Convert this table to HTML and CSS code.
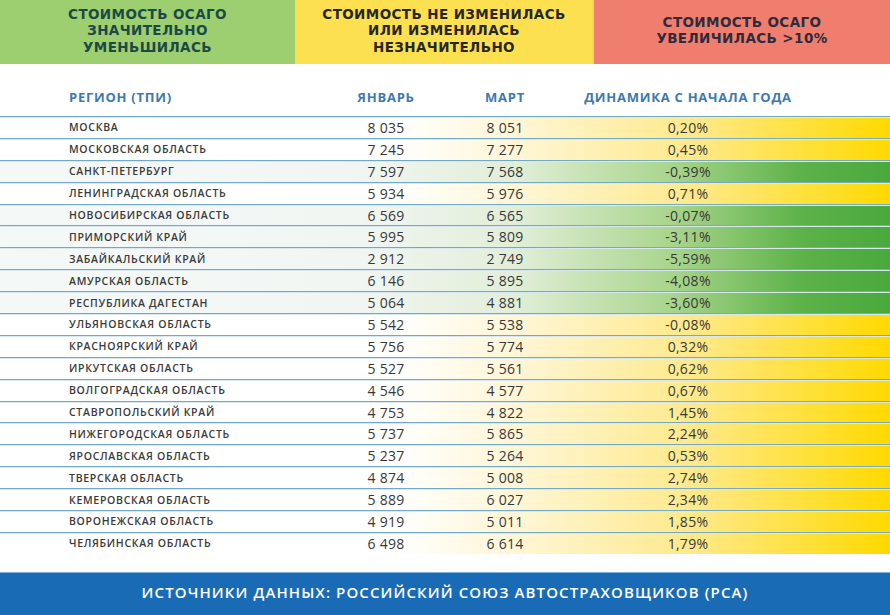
FILE: index.html
```html
<!DOCTYPE html>
<html lang="ru">
<head>
<meta charset="utf-8">
<title>ОСАГО</title>
<link rel="stylesheet" href="styles.css">
</head>
<body>
<div class="page">
  <div class="legend">
    <div class="leg leg-green">СТОИМОСТЬ ОСАГО<br>ЗНАЧИТЕЛЬНО<br>УМЕНЬШИЛАСЬ</div>
    <div class="leg leg-yellow">СТОИМОСТЬ НЕ ИЗМЕНИЛАСЬ<br>ИЛИ ИЗМЕНИЛАСЬ<br>НЕЗНАЧИТЕЛЬНО</div>
    <div class="leg leg-red">СТОИМОСТЬ ОСАГО<br>УВЕЛИЧИЛАСЬ &gt;10%</div>
  </div>
  <div class="thead">
    <div class="th th-region">РЕГИОН (ТПИ)</div>
    <div class="th th-jan">ЯНВАРЬ</div>
    <div class="th th-mar">МАРТ</div>
    <div class="th th-dyn">ДИНАМИКА С НАЧАЛА ГОДА</div>
  </div>
  <div class="tbody">
    <div class="row up"><span class="reg">МОСКВА</span><span class="num">8 035</span><span class="num">8 051</span><span class="pct">0,20%</span></div>
    <div class="row up"><span class="reg">МОСКОВСКАЯ ОБЛАСТЬ</span><span class="num">7 245</span><span class="num">7 277</span><span class="pct">0,45%</span></div>
    <div class="row down"><span class="reg">САНКТ-ПЕТЕРБУРГ</span><span class="num">7 597</span><span class="num">7 568</span><span class="pct">-0,39%</span></div>
    <div class="row up"><span class="reg">ЛЕНИНГРАДСКАЯ ОБЛАСТЬ</span><span class="num">5 934</span><span class="num">5 976</span><span class="pct">0,71%</span></div>
    <div class="row down"><span class="reg">НОВОСИБИРСКАЯ ОБЛАСТЬ</span><span class="num">6 569</span><span class="num">6 565</span><span class="pct">-0,07%</span></div>
    <div class="row down"><span class="reg">ПРИМОРСКИЙ КРАЙ</span><span class="num">5 995</span><span class="num">5 809</span><span class="pct">-3,11%</span></div>
    <div class="row down"><span class="reg">ЗАБАЙКАЛЬСКИЙ КРАЙ</span><span class="num">2 912</span><span class="num">2 749</span><span class="pct">-5,59%</span></div>
    <div class="row down"><span class="reg">АМУРСКАЯ ОБЛАСТЬ</span><span class="num">6 146</span><span class="num">5 895</span><span class="pct">-4,08%</span></div>
    <div class="row down"><span class="reg">РЕСПУБЛИКА ДАГЕСТАН</span><span class="num">5 064</span><span class="num">4 881</span><span class="pct">-3,60%</span></div>
    <div class="row up"><span class="reg">УЛЬЯНОВСКАЯ ОБЛАСТЬ</span><span class="num">5 542</span><span class="num">5 538</span><span class="pct">-0,08%</span></div>
    <div class="row up"><span class="reg">КРАСНОЯРСКИЙ КРАЙ</span><span class="num">5 756</span><span class="num">5 774</span><span class="pct">0,32%</span></div>
    <div class="row up"><span class="reg">ИРКУТСКАЯ ОБЛАСТЬ</span><span class="num">5 527</span><span class="num">5 561</span><span class="pct">0,62%</span></div>
    <div class="row up"><span class="reg">ВОЛГОГРАДСКАЯ ОБЛАСТЬ</span><span class="num">4 546</span><span class="num">4 577</span><span class="pct">0,67%</span></div>
    <div class="row up"><span class="reg">СТАВРОПОЛЬСКИЙ КРАЙ</span><span class="num">4 753</span><span class="num">4 822</span><span class="pct">1,45%</span></div>
    <div class="row up"><span class="reg">НИЖЕГОРОДСКАЯ ОБЛАСТЬ</span><span class="num">5 737</span><span class="num">5 865</span><span class="pct">2,24%</span></div>
    <div class="row up"><span class="reg">ЯРОСЛАВСКАЯ ОБЛАСТЬ</span><span class="num">5 237</span><span class="num">5 264</span><span class="pct">0,53%</span></div>
    <div class="row up"><span class="reg">ТВЕРСКАЯ ОБЛАСТЬ</span><span class="num">4 874</span><span class="num">5 008</span><span class="pct">2,74%</span></div>
    <div class="row up"><span class="reg">КЕМЕРОВСКАЯ ОБЛАСТЬ</span><span class="num">5 889</span><span class="num">6 027</span><span class="pct">2,34%</span></div>
    <div class="row up"><span class="reg">ВОРОНЕЖСКАЯ ОБЛАСТЬ</span><span class="num">4 919</span><span class="num">5 011</span><span class="pct">1,85%</span></div>
    <div class="row up last"><span class="reg">ЧЕЛЯБИНСКАЯ ОБЛАСТЬ</span><span class="num">6 498</span><span class="num">6 614</span><span class="pct">1,79%</span></div>
  </div>
  <div class="source">ИСТОЧНИКИ ДАННЫХ: РОССИЙСКИЙ СОЮЗ АВТОСТРАХОВЩИКОВ (РСА)</div>
</div>
</body>
</html>
```

FILE: styles.css
```css
* { box-sizing: border-box; }
html, body { margin: 0; padding: 0; background: #fff; }
body { font-family: "Open Sans", "Liberation Sans", sans-serif; }
.page { width: 890px; height: 615px; overflow: hidden; display: flex; flex-direction: column; }

.legend { display: grid; grid-template-columns: 296px 296px 298px; height: 64px; }
.leg { display: flex; align-items: center; justify-content: center; text-align: center;
  font-family: "DejaVu Sans", "Open Sans", sans-serif;
  font-weight: 700; font-size: 13.5px; line-height: 16.5px; letter-spacing: 0.4px; padding-bottom: 3px; }
.leg-green { background: #9dce6f; color: #1b4a46; border-right: 1px solid #d9e28c; }
.leg-yellow { background: #fde04f; color: #262626; }
.leg-red { background: #f07e6e; color: #2e2b3c; border-left: 2px solid #f8d65c; padding-bottom: 4px; }

.thead, .row { display: grid; grid-template-columns: 69px 262px 110px 128px 238px 83px; }
.thead { height: 52px; align-items: end; padding-bottom: 10px; }
.th { font-weight: 700; font-size: 13px; letter-spacing: 0.75px; color: #3b79b2; text-align: center; }
.th-region { grid-column: 2; text-align: left; }

.tbody { display: flex; flex-direction: column; }
.row { height: 21.9px; align-items: center; border-top: 1px solid #72a9c7;
  box-shadow: inset 0 1px 0 #d6e9f2; }
.row.up { background: linear-gradient(to right, #ffffff 0%, #ffffff 44%, #fff6d6 58%, #fee98a 78%, #ffd900 100%); }
.row.down { background: linear-gradient(to right, #f4f8f7 0%, #f2f6f3 40%, #e1eed8 58%, #a7d48a 76%, #5db249 90%, #4aa93c 100%); }
.reg { grid-column: 2; font-size: 10.5px; font-weight: 600; color: #3a3a3a; letter-spacing: 0.7px; }
.num, .pct { text-align: center; font-size: 14px; color: #383838; letter-spacing: 0.3px; }

.source { margin-top: auto; height: 43px; background: #1a6bb6; border-top: 1px solid #79b3e3;
  color: #fff; display: flex; align-items: center; justify-content: center;
  font-size: 15px; font-weight: 600; letter-spacing: 1.1px; padding-bottom: 4px; }
```
